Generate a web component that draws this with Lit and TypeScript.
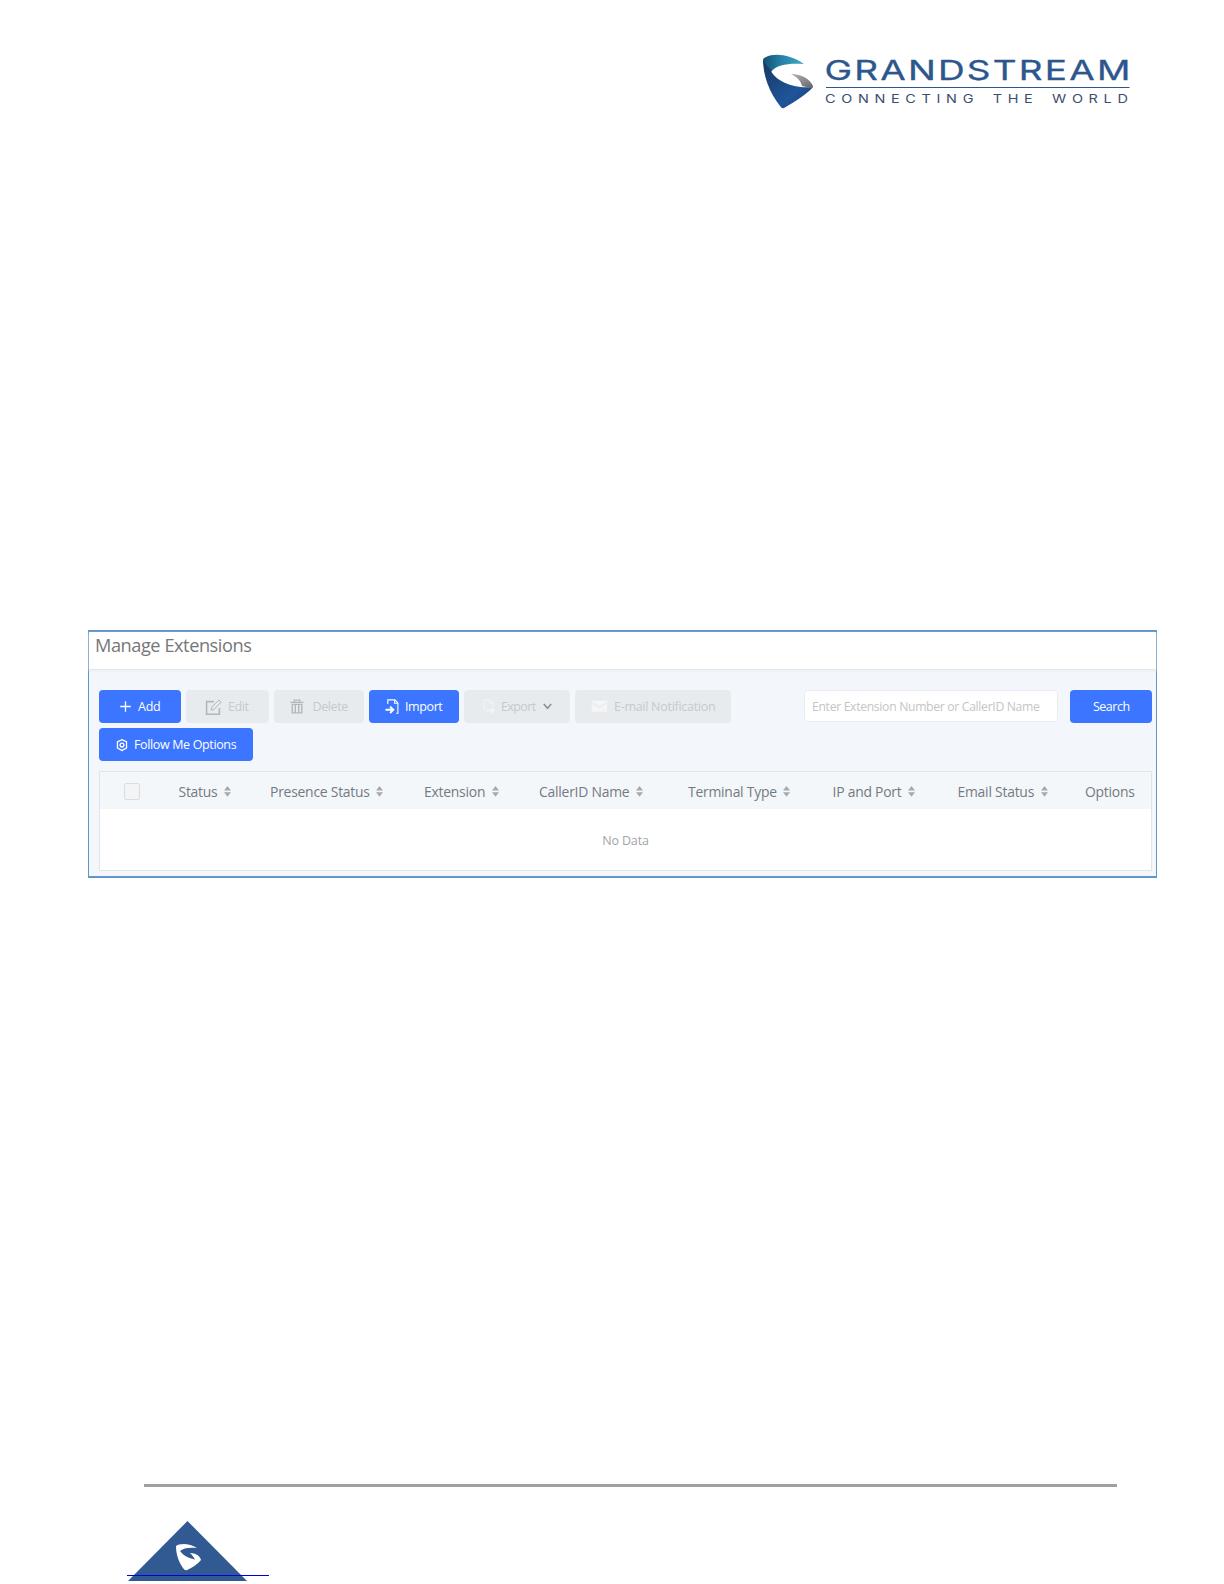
import { LitElement, html, css, svg } from 'lit';
import { customElement, property } from 'lit/decorators.js';
import { classMap } from 'lit/directives/class-map.js';

const icons: Record<string, unknown> = {
  add: svg`<path d="M6.5 1.2v10.6M1.2 6.5h10.6" stroke-width="1.3" />`,
  edit: svg`
    <path d="M9 2.6H1.6v12.6h12.8V9" stroke-width="1.6" />
    <path d="M6.2 11.2l.7-3.2 7-7 2.2 2.1-7 7.2z" stroke-width="1" />`,
  trash: svg`
    <path d="M.5 3.3h13M4.3 3V1.1h5.4V3" stroke-width="1.3" />
    <path d="M2.2 5.4v8.5h9.6V5.4M5.3 5.2v8.5M8.7 5.2v8.5M1.6 5.4h10.8" stroke-width="1.4" />`,
  import: svg`
    <path d="M1.8 5V.9H9l2.9 3v10.4h-1.6M8.6 1v3.2h3" stroke-width="1.1" />
    <path d="M-.5 10.8h7.2M4.1 7.6l3.2 3.2L4.100 14" stroke-width="1.9" />`,
  export: svg`
    <path d="M1.8 11V.9h6.4l2.9 3v4M7.8 1v3.2h3" stroke-width="1" />
    <path d="M4 11.5h7.6M9.3 8.9l2.7 2.6L9.3 14" stroke-width="1.6" />`,
  mail: svg`
    <path d="M1.2 2.1h14.4v10.6H1.2z" fill="currentColor" stroke-width="1" />
    <path d="M1.4 3.9l7 4.2 7-4.2" stroke="#e8ebee" stroke-width="1.2" />`,
  gear: svg`
    <path d="M6 .6L8 1.7l2.600 1.100-.1 2.900.1 3.300L8 10.300l-2 1.300-2-1.300L1.400 9l.1-3.300-.1-2.900L4 1.700z" stroke-width="1.3" stroke-linejoin="round" />
    <circle cx="6" cy="6.100" r="1.9" stroke-width="1.3" />`,
};

@customElement('gs-icon')
class GsIcon extends LitElement {
  static styles = css`
    :host {
      display: flex;
      flex: none;
    }
    svg {
      display: block;
      overflow: visible;
    }
  `;

  @property() name = '';
  @property({ type: Number }) width = 14;
  @property({ type: Number }) height = 14;

  render() {
    return html`
      <svg width=${this.width} height=${this.height} fill="none" stroke="currentColor">
        ${icons[this.name]}
      </svg>
    `;
  }
}

@customElement('gs-button')
class GsButton extends LitElement {
  static styles = css`
    :host {
      display: block;
      flex: none;
    }
    .btn {
      /* Layout */
      display: flex;
      align-items: center;
      justify-content: flex-start;
      box-sizing: border-box;
      width: 100%;
      height: 33px;
      padding: 0 0 0 var(--btn-inset, 20px);
      /* Color */
      background: #3c75ff;
      color: #fff;
      border: 0;
      border-radius: 4px;
      /* Typography */
      font-family: 'Open Sans', 'Noto Sans', sans-serif;
      font-size: 12.5px;
      line-height: 33px;
      letter-spacing: var(--btn-tracking, -0.25px);
      white-space: nowrap;
    }
    .btn--disabled {
      background: #e8ebee;
      color: #c5c9d0;
    }
    .btn__label {
      margin-left: var(--btn-gap, 7px);
    }
  `;

  @property({ type: Boolean }) disabled = false;

  render() {
    return html`
      <button class=${classMap({ btn: true, 'btn--disabled': this.disabled })} ?disabled=${this.disabled}>
        <slot name="icon"></slot>
        <span class="btn__label"><slot></slot></span>
        <slot name="after"></slot>
      </button>
    `;
  }
}

@customElement('app-root')
class AppRoot extends LitElement {
  static styles = css`
    :host {
      display: block;
      font-family: 'Open Sans', 'Noto Sans', sans-serif;
    }
    .page {
      display: flex;
      flex-direction: column;
      box-sizing: border-box;
      width: 1224px;
      height: 1584px;
      overflow: hidden;
      background: #fff;
    }

    /* Letterhead */
    .letterhead {
      display: flex;
      justify-content: flex-end;
      box-sizing: border-box;
      height: 630px;
      padding: 48px 89px 0 0;
    }
    .brand {
      font-family: Inter, 'Liberation Sans', sans-serif;
    }

    /* Panel */
    .panel {
      box-sizing: border-box;
      width: 1069px;
      height: 248px;
      margin-left: 88px;
      border: solid #6096cc;
      border-width: 2px 1px;
      background: #f3f7fb;
    }
    .panel__title {
      box-sizing: border-box;
      height: 38px;
      margin: 0;
      padding-left: 6px;
      background: #fff;
      border-bottom: 1px solid #e4e8eb;
      box-shadow: 0 1px 2px #e9edf0;
      color: #777;
      font-size: 18.2px;
      font-weight: 400;
      line-height: 27px;
      letter-spacing: -0.45px;
    }
    .toolbar {
      display: flex;
      flex-wrap: wrap;
      padding: 20px 4px 0 10px;
      row-gap: 5px;
    }
    .add { width: 82px; --btn-gap: 6px; margin-right: 5px; }
    .edit { width: 82.5px; margin-right: 5px; --btn-inset: 19px; --btn-gap: 6px; --btn-tracking: -0.45px; }
    .delete { width: 90px; margin-right: 5px; --btn-inset: 16px; --btn-gap: 9px; --btn-tracking: -0.4px; }
    .import { width: 90.5px; margin-right: 5px; --btn-inset: 17px; --btn-gap: 4.5px; --btn-tracking: -0.4px; }
    .export { width: 106px; margin-right: 5px; --btn-inset: 18px; --btn-gap: 6px; --btn-tracking: -0.6px; }
    .notify { width: 156px; --btn-inset: 16px; --btn-gap: 6px; --btn-tracking: -0.28px; }
    .search { width: 82px; --btn-inset: 23px; --btn-gap: 0px; --btn-tracking: -0.5px; }
    .follow { width: 154px; --btn-inset: 17px; --btn-gap: 6px; --btn-tracking: -0.36px; }
    .faint { color: #f3f5f7; }
    .grey { color: #b3b7bc; }
    .chevron {
      margin-left: 7px;
      color: #8d9299;
    }
    .query {
      box-sizing: border-box;
      width: 254px;
      height: 32px;
      margin: 0 12px 0 auto;
      padding: 0 7px;
      border: 1px solid #e9edf1;
      border-radius: 4px;
      background: #fff;
      font-family: inherit;
      font-size: 12.2px;
      letter-spacing: -0.32px;
    }
    .query::placeholder {
      color: #c3c5c8;
      opacity: 1;
    }

    /* Table */
    .table {
      box-sizing: border-box;
      width: 1053px;
      height: 100px;
      margin: 10px 0 0 10px;
      border: 1px solid #e1e5e9;
      background: #fff;
    }
    .table__head {
      display: grid;
      grid-template-columns: 78.5px 91.5px 154px 115px 149px 144.5px 125px 127.5px 1fr;
      align-items: center;
      height: 37px;
      background: #f3f7fa;
      color: #747a82;
      font-size: 13.9px;
      letter-spacing: -0.23px;
    }
    .cell {
      display: flex;
      align-items: center;
      gap: 6.5px;
      padding-top: 2px;
      line-height: 20px;
      white-space: nowrap;
    }
    .checkbox {
      box-sizing: border-box;
      width: 16px;
      height: 17px;
      margin: 2px 0 0 24px;
      border: 1px solid #dadcde;
      border-radius: 2px;
      background: #f3f4f5;
    }
    .table__empty {
      padding-top: 2px;
      color: #a2a4a7;
      font-size: 12.5px;
      line-height: 60px;
      letter-spacing: -0.15px;
      text-align: center;
    }

    /* Footer */
    .footer {
      position: relative;
      box-sizing: border-box;
      width: 973px;
      height: 100px;
      margin: auto 0 0 144px;
      border-top: 3px solid #a0a0a0;
    }
    .badge {
      display: block;
      position: absolute;
      top: 33px;
      left: -17px;
    }
  `;

  columns = [
    'Status',
    'Presence Status',
    'Extension',
    'CallerID Name',
    'Terminal Type',
    'IP and Port',
    'Email Status',
    'Options',
  ];

  _renderLogo() {
    return html`
      <svg class="brand" width="380" height="64">
        <defs>
          <linearGradient id="teal" x1="0" x2="1" y1="0" y2="0">
            <stop offset="0" stop-color="#145071" />
            <stop offset="0.45" stop-color="#2482a8" />
            <stop offset="1" stop-color="#42a9c6" />
          </linearGradient>
          <linearGradient id="navy" x1="0" x2="1" y1="0" y2="1">
            <stop offset="0" stop-color="#17375e" />
            <stop offset="0.65" stop-color="#1f559b" />
            <stop offset="1" stop-color="#173e72" />
          </linearGradient>
          <linearGradient id="steel" x1="0" x2="1" y1="0" y2="1">
            <stop offset="0" stop-color="#b5b5b5" />
            <stop offset="1" stop-color="#656466" />
          </linearGradient>
        </defs>
        <path d="M8 12Q8 10 11 9C19 5 35 6 49 16C35 15 22 16 16 24L9 17Z" fill="url(#teal)" />
        <path d="M8 11C10 18 19 23 16 23C21 33 38 41 58 39C53 45 40 54 29 60Q27 61 25 58C14 44 8 27 8 11Z" fill="url(#navy)" />
        <path d="M36 26C47 26 55 31 58 38Q58 40 55 40L47 38C46 33 42 29 36 26Z" fill="url(#steel)" />
        <text x="69.5" y="31.5" font-size="27" font-weight="400" fill="#2c568e" stroke="#2c568e" stroke-width="0.3"
          letter-spacing="1.6" textLength="308" lengthAdjust="spacingAndGlyphs">GRANDSTREAM</text>
        <path d="M71 39.5h303.5" stroke="#2c568e" stroke-width="1" />
        <text x="70" y="54.8" font-size="11.2" fill="#3b4f70" letter-spacing="4.4" word-spacing="3"
          textLength="308.5" lengthAdjust="spacingAndGlyphs">CONNECTING THE WORLD</text>
      </svg>
    `;
  }

  _renderSorter() {
    return html`
      <svg width="7" height="11" fill="#a6a9ad">
        <path d="M3.5 0L7 4.6H0zM0 6.2h7L3.5 10.8z" />
      </svg>
    `;
  }

  _renderToolbar() {
    return html`
      <div class="toolbar">
        <gs-button class="add"><gs-icon slot="icon" name="add" width="13" height="13"></gs-icon>Add</gs-button>
        <gs-button class="edit" disabled>
          <gs-icon class="grey" slot="icon" name="edit" width="17" height="16"></gs-icon>Edit</gs-button>
        <gs-button class="delete" disabled>
          <gs-icon class="grey" slot="icon" name="trash" width="14" height="15"></gs-icon>Delete</gs-button>
        <gs-button class="import"><gs-icon slot="icon" name="import" width="15" height="16"></gs-icon>Import</gs-button>
        <gs-button class="export" disabled>
          <gs-icon class="faint" slot="icon" name="export" width="13" height="15"></gs-icon>Export
          <svg class="chevron" slot="after" width="9" height="7" fill="none" stroke="currentColor">
            <path d="M.8 1l3.7 4.2L8.2 1" stroke-width="1.7" />
          </svg>
        </gs-button>
        <gs-button class="notify" disabled>
          <gs-icon class="faint" slot="icon" name="mail" width="17" height="15"></gs-icon>E-mail Notification</gs-button>
        <input class="query" placeholder="Enter Extension Number or CallerID Name" />
        <gs-button class="search">Search</gs-button>
        <gs-button class="follow">
          <gs-icon slot="icon" name="gear" width="12" height="12"></gs-icon>Follow Me Options</gs-button>
      </div>
    `;
  }

  _renderTable() {
    return html`
      <div class="table">
        <div class="table__head">
          <span class="checkbox"></span>
          ${this.columns.map(
            (name) => html`<div class="cell">${name}${name === 'Options' ? '' : this._renderSorter()}</div>`
          )}
        </div>
        <div class="table__empty">No Data</div>
      </div>
    `;
  }

  render() {
    return html`
      <div class="page">
        <header class="letterhead">${this._renderLogo()}</header>
        <section class="panel">
          <h1 class="panel__title">Manage Extensions</h1>
          ${this._renderToolbar()} ${this._renderTable()}
        </section>
        <footer class="footer">
          <svg class="badge" width="144" height="64">
            <path d="M60.5 1L120 61H1Z" fill="#315a93" />
            <path d="M49 26C52 23 63 23 70 28C63 27 56 28 53 31C57 37 66 40 74 40Q69 46 60 50Q58 51 56 48C51 41 49 33 49 26Z" fill="#fff" />
            <path d="M63 33C69 33 73 36 74 40L68 40C67 37 65 35 63 33Z" fill="#fff" />
            <path d="M0 55.5h142" stroke="#0000dc" />
          </svg>
        </footer>
      </div>
    `;
  }
}
